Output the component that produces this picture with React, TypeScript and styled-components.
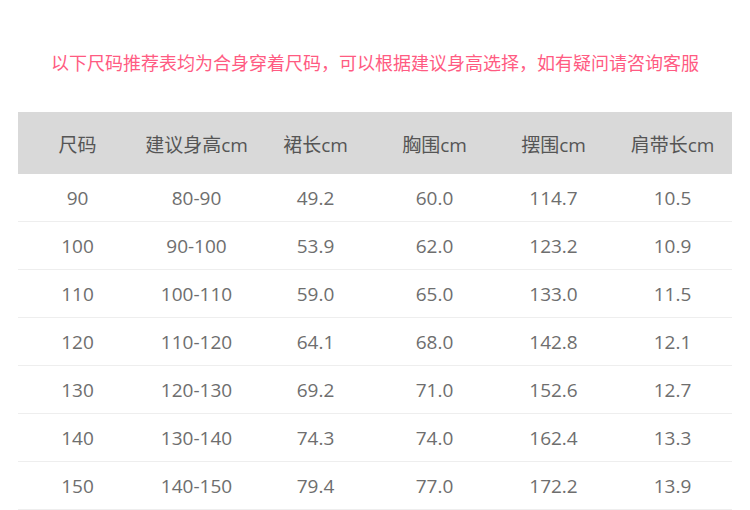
import styled, { createGlobalStyle } from "styled-components";

const GlobalStyle = createGlobalStyle`
    html, body {
        margin: 0;
        padding: 0;
        background: #ffffff;
    }
    body {
        font-family: "Noto Sans CJK SC", "Noto Sans", sans-serif;
    }
`;

const Page = styled.div`
    width: 750px;
    height: 510px;
    overflow: hidden;
    padding: 0 18px;
    box-sizing: border-box;
`;

const Notice = styled.p`
    margin: 0;
    padding-top: 48px;
    height: 63px;
    box-sizing: border-box;
    text-align: center;
    font-size: 18px;
    line-height: 28px;
    color: #ff5b82;
    white-space: nowrap;
`;

const Table = styled.div`
    margin-top: 49px;
    width: 714px;
`;

const Row = styled.div<{ $head?: boolean }>`
    display: grid;
    grid-template-columns: repeat(6, 1fr);
    align-items: center;
    height: ${(p) => (p.$head ? "62px" : "48px")};
    background: ${(p) => (p.$head ? "#d9d9d9" : "transparent")};
    border-bottom: ${(p) => (p.$head ? "none" : "1px solid #eeeeee")};
    box-sizing: border-box;
`;

const Cell = styled.div<{ $head?: boolean }>`
    text-align: center;
    font-family: "Open Sans", "Noto Sans CJK SC", sans-serif;
    font-size: 19px;
    color: ${(p) => (p.$head ? "#555555" : "#6e6e6e")};
    padding-top: ${(p) => (p.$head ? "1px" : "0")};
`;

const headers = ["尺码", "建议身高cm", "裙长cm", "胸围cm", "摆围cm", "肩带长cm"];

const rows = [
    ["90", "80-90", "49.2", "60.0", "114.7", "10.5"],
    ["100", "90-100", "53.9", "62.0", "123.2", "10.9"],
    ["110", "100-110", "59.0", "65.0", "133.0", "11.5"],
    ["120", "110-120", "64.1", "68.0", "142.8", "12.1"],
    ["130", "120-130", "69.2", "71.0", "152.6", "12.7"],
    ["140", "130-140", "74.3", "74.0", "162.4", "13.3"],
    ["150", "140-150", "79.4", "77.0", "172.2", "13.9"],
];

export default function App() {
    return (
        <Page>
            <GlobalStyle />
            <Notice>以下尺码推荐表均为合身穿着尺码，可以根据建议身高选择，如有疑问请咨询客服</Notice>
            <Table>
                <Row $head>
                    {headers.map((h) => (
                        <Cell $head key={h}>{h}</Cell>
                    ))}
                </Row>
                {rows.map((r) => (
                    <Row key={r[0]}>
                        {r.map((v, i) => (
                            <Cell key={i}>{v}</Cell>
                        ))}
                    </Row>
                ))}
            </Table>
        </Page>
    );
}
